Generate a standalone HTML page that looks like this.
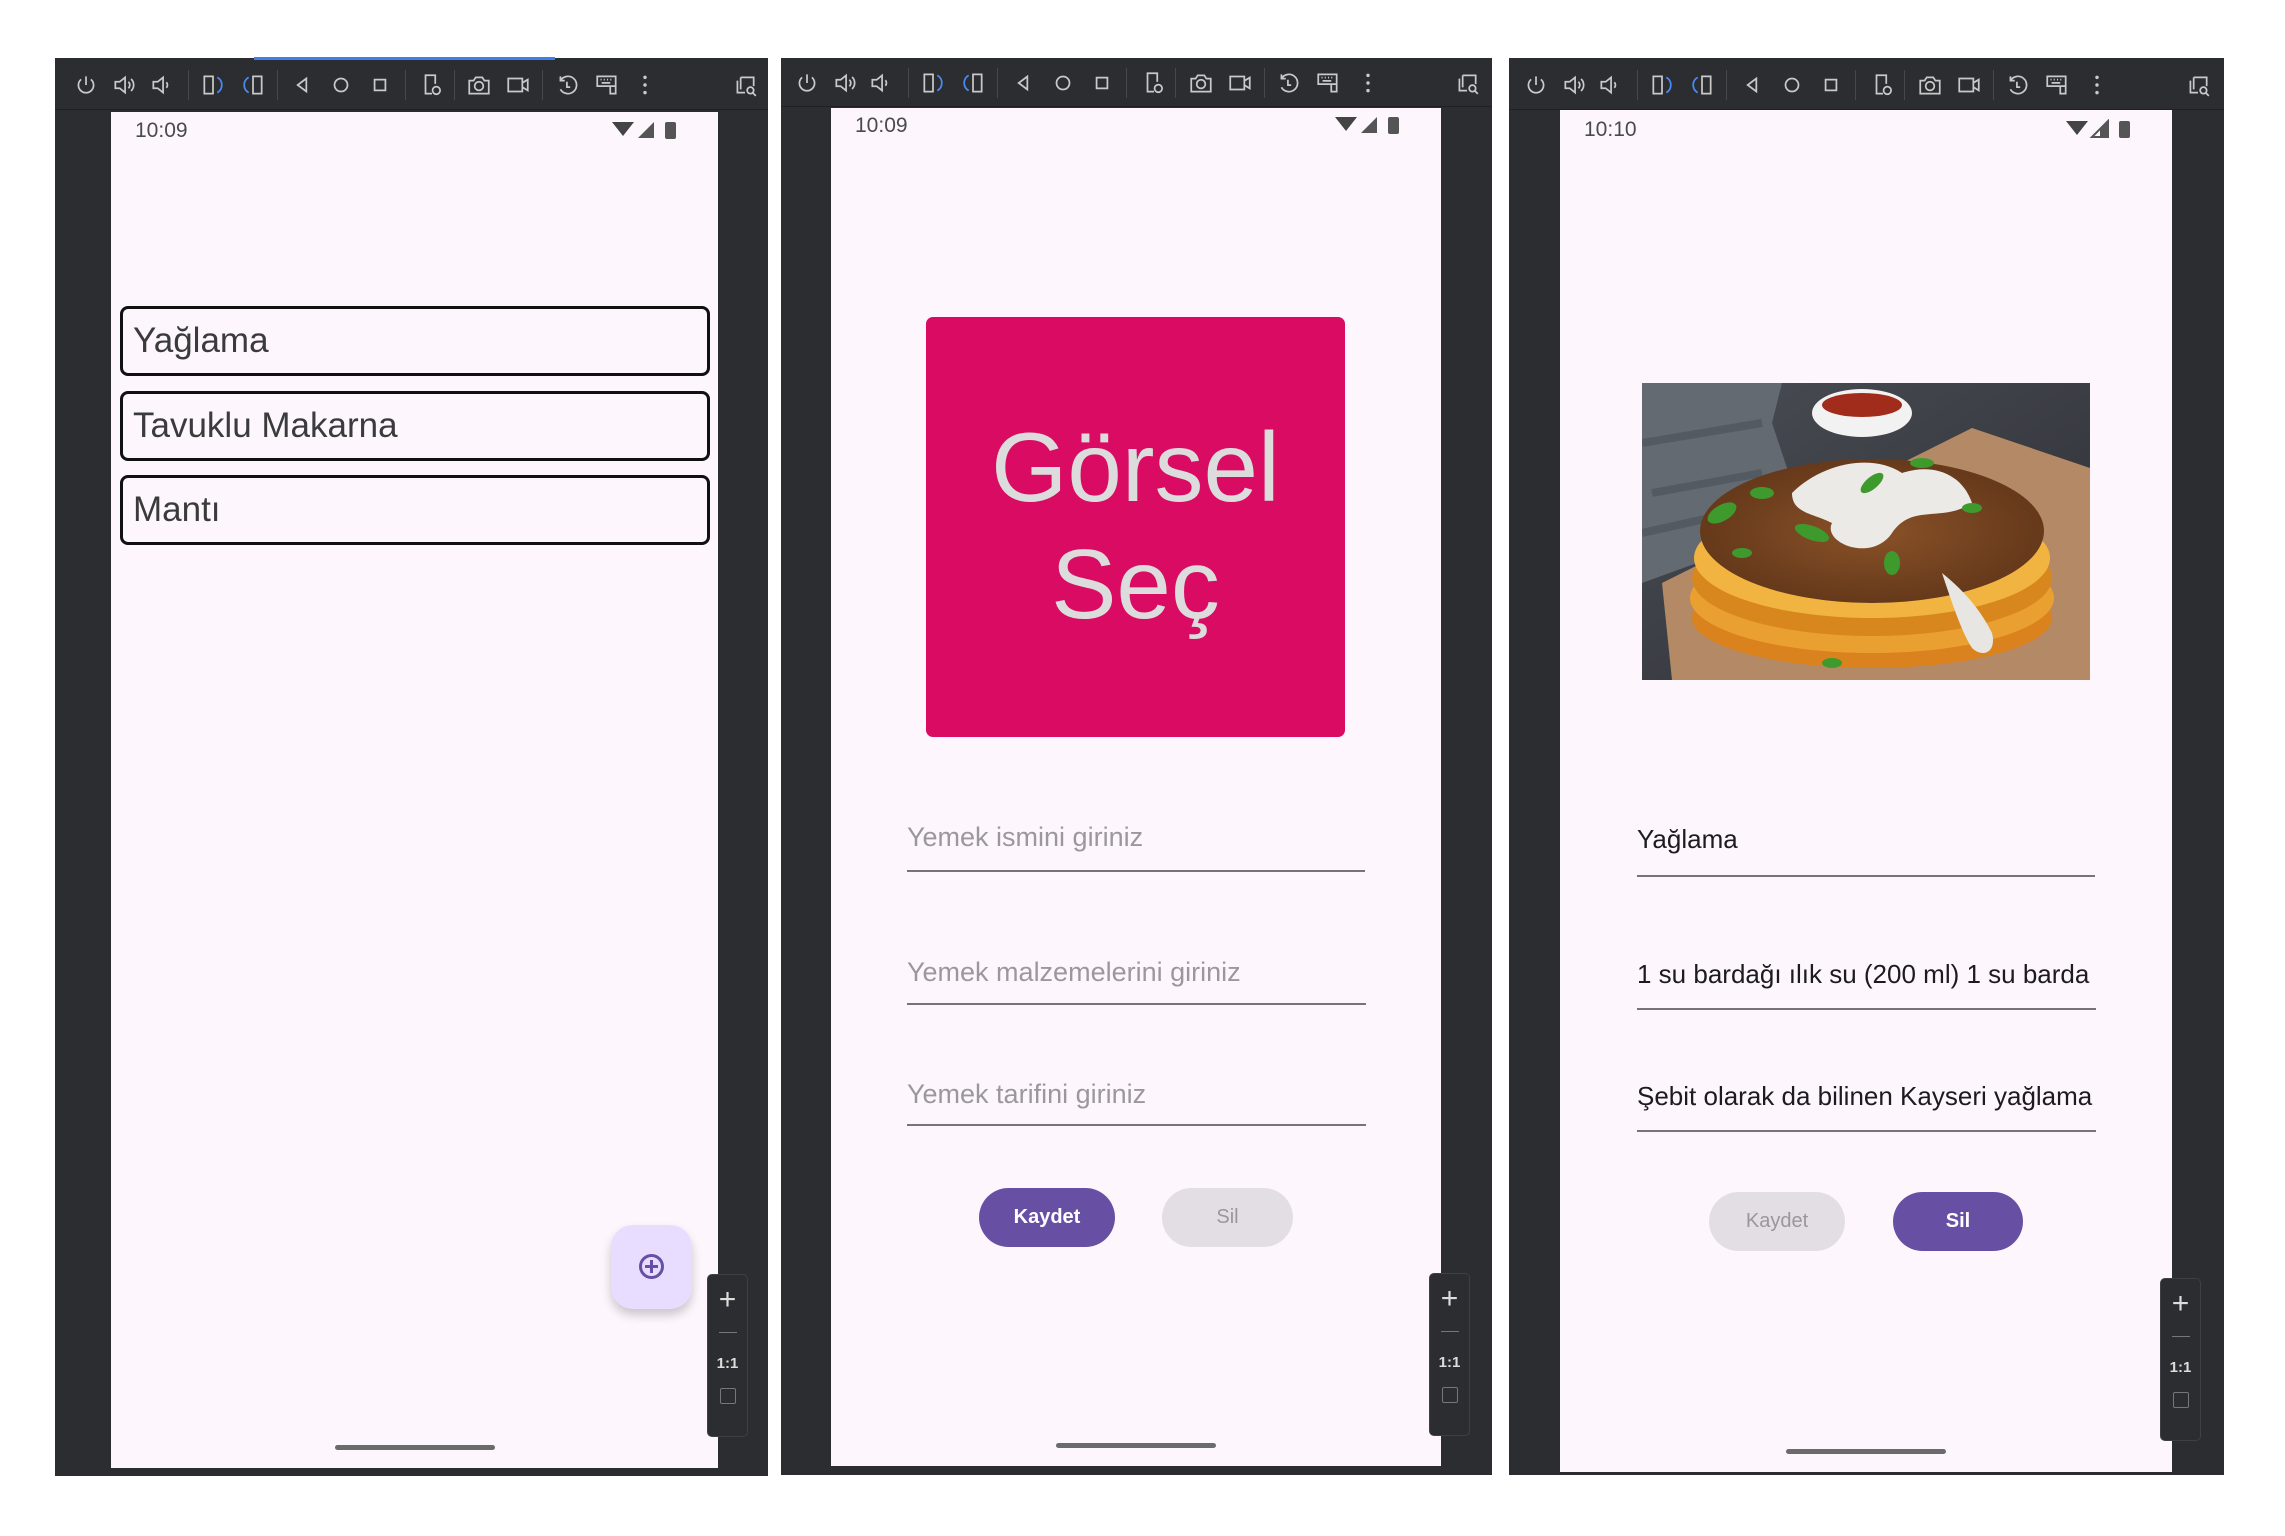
<!DOCTYPE html>
<html><head><meta charset="utf-8">
<style>
*{margin:0;padding:0;box-sizing:border-box}
body{width:2285px;height:1536px;background:#fff;position:relative;overflow:hidden;font-family:"Liberation Sans",sans-serif}
.panel{position:absolute;top:58px;background:#2b2d30}
.tb{position:absolute;left:0;right:0;top:0;height:52px;border-bottom:1px solid #1f2022}
.ic{position:absolute;top:14px;width:26px;height:26px}
.sep{position:absolute;top:12px;width:1px;height:30px;background:#45484c}
.screen{position:absolute;background:#fdf7fd;overflow:hidden}
.time{position:absolute;left:24px;top:7px;font-size:21px;color:#4a4a4a}
.stat{position:absolute;top:8px;right:40px}
.handle{position:absolute;bottom:18px;left:50%;margin-left:-80px;width:160px;height:5px;border-radius:3px;background:#6b6b6b}
.zc{position:absolute;width:41px;height:163px;background:#2b2d30;border:1px solid #3d4044;border-radius:5px;color:#ddd;text-align:center}
.item{position:absolute;left:9px;width:590px;height:70px;border:3px solid #111;border-radius:8px;font-size:35px;color:#3b3b3b;padding-left:10px;line-height:64px}
.hint{position:absolute;font-size:27px;color:#9c969e;white-space:nowrap}
.val{position:absolute;font-size:26px;color:#1d1b20;white-space:nowrap;overflow:hidden}
.ul{position:absolute;height:2px;background:#77737a}
.btn{position:absolute;height:59px;border-radius:30px;font-size:20px;text-align:center;line-height:59px}
.on{background:#6750a4;color:#fff;font-weight:bold}
.off{background:#e3dee4;color:#9a969c}
</style></head><body>

<div class="panel" style="left:55px;width:713px;height:1418px">
 <div style="position:absolute;left:199px;top:-1px;width:301px;height:3px;background:#3c7ff0"></div>
 <div class="tb">
  <svg class="ic" style="left:18px" viewBox="0 0 24 24" fill="none" stroke="#c9c9c9" stroke-width="1.6"><path d="M12 4v8M7.5 6.8a7 7 0 1 0 9 0"/></svg>
  <svg class="ic" style="left:56px" viewBox="0 0 24 24" fill="none" stroke="#c9c9c9" stroke-width="1.6"><path d="M4 9h4l5-4v14l-5-4H4zM16 9a4 4 0 0 1 0 6M18.5 6.5a7.5 7.5 0 0 1 0 11"/></svg>
  <svg class="ic" style="left:94px" viewBox="0 0 24 24" fill="none" stroke="#c9c9c9" stroke-width="1.6"><path d="M4 9h4l5-4v14l-5-4H4zM16 9.5a3.5 3.5 0 0 1 0 5"/></svg>
  <div class="sep" style="left:133px"></div>
  <svg class="ic" style="left:145px" viewBox="0 0 24 24" fill="none" stroke-width="1.6"><path d="M4 4h8v16H4z" stroke="#c9c9c9"/><path d="M16 5a8 8 0 0 1 0 14" stroke="#4a8cf7"/></svg>
  <svg class="ic" style="left:185px" viewBox="0 0 24 24" fill="none" stroke-width="1.6"><path d="M12 4h8v16h-8z" stroke="#c9c9c9"/><path d="M8 5a8 8 0 0 0 0 14" stroke="#4a8cf7"/></svg>
  <div class="sep" style="left:222px"></div>
  <svg class="ic" style="left:234px" viewBox="0 0 24 24" fill="none" stroke="#c9c9c9" stroke-width="1.6"><path d="M16 6L8 12l8 6z"/></svg>
  <svg class="ic" style="left:273px" viewBox="0 0 24 24" fill="none" stroke="#c9c9c9" stroke-width="1.6"><circle cx="12" cy="12" r="6"/></svg>
  <svg class="ic" style="left:312px" viewBox="0 0 24 24" fill="none" stroke="#c9c9c9" stroke-width="1.6"><path d="M7 7h10v10H7z"/></svg>
  <div class="sep" style="left:350px"></div>
  <svg class="ic" style="left:364px" viewBox="0 0 24 24" fill="none" stroke="#c9c9c9" stroke-width="1.6"><path d="M12 20H6V3h9v8"/><circle cx="16" cy="17" r="3.5"/></svg>
  <div class="sep" style="left:399px"></div>
  <svg class="ic" style="left:411px" viewBox="0 0 24 24" fill="none" stroke="#c9c9c9" stroke-width="1.6"><path d="M3 8h4l2-3h6l2 3h4v12H3z"/><circle cx="12" cy="13" r="4"/></svg>
  <svg class="ic" style="left:450px" viewBox="0 0 24 24" fill="none" stroke="#c9c9c9" stroke-width="1.6"><path d="M3 6h13v12H3zM16 10l5-3v10l-5-3"/></svg>
  <div class="sep" style="left:487px"></div>
  <svg class="ic" style="left:500px" viewBox="0 0 24 24" fill="none" stroke="#c9c9c9" stroke-width="1.6"><path d="M5 8a8 8 0 1 1 0 8M5 4v4h4M11 9v5h3"/></svg>
  <svg class="ic" style="left:539px" viewBox="0 0 24 24" fill="none" stroke="#c9c9c9" stroke-width="1.6"><path d="M3 4h17v9H3zM6 7h1M9 7h1M12 7h1M15 7h1M7 10h8M15 13v7h5v-7"/></svg>
  <svg class="ic" style="left:577px" viewBox="0 0 24 24" fill="#c9c9c9"><circle cx="12" cy="5" r="1.6"/><circle cx="12" cy="12" r="1.6"/><circle cx="12" cy="19" r="1.6"/></svg>
  <svg class="ic" style="left:677px" viewBox="0 0 24 24" fill="none" stroke="#c9c9c9" stroke-width="1.6"><path d="M5 8v11h7M8 5h12v8M8 5v11"/><circle cx="17" cy="17" r="3"/><path d="M19 19l3 3"/></svg>
 </div>
 <div class="screen" style="left:56px;top:54px;width:607px;height:1356px">
  <div class="time">10:09</div>
  <svg class="stat" width="66" height="22" viewBox="0 0 66 22"><path d="M0 2h22L11 16z" fill="#444"/><path d="M26 18L42 2v16z" fill="#555"/><rect x="53" y="2" width="11" height="17" rx="2" fill="#555"/></svg>
  <div class="item" style="top:194px">Yağlama</div>
  <div class="item" style="top:279px">Tavuklu Makarna</div>
  <div class="item" style="top:363px">Mantı</div>
  <div style="position:absolute;left:500px;top:1113px;width:81px;height:84px;border-radius:22px;background:#e9ddff;box-shadow:0 6px 10px rgba(0,0,0,.2)">
   <svg style="position:absolute;left:27px;top:28px" width="27" height="27" viewBox="0 0 27 27" fill="none" stroke="#6750a4" stroke-width="3"><circle cx="13.5" cy="13.5" r="11"/><path d="M13.5 7v13M7 13.5h13"/></svg>
  </div>
  <div class="handle"></div>
 </div>
 <div class="zc" style="left:652px;top:1216px">
  <div style="font-size:30px;line-height:30px;margin-top:10px;font-weight:100">+</div>
  <div style="width:18px;height:1px;background:#777;margin:17px auto 0"></div>
  <div style="font-size:15px;font-weight:bold;margin-top:22px">1:1</div>
  <div style="width:16px;height:16px;border:1px solid #777;border-radius:2px;margin:16px auto 0"></div>
 </div>
</div>

<div class="panel" style="left:781px;width:711px;height:1417px">
 <div class="tb" style="height:49px">
  <svg class="ic" style="left:13px;top:12px" viewBox="0 0 24 24" fill="none" stroke="#c9c9c9" stroke-width="1.6"><path d="M12 4v8M7.5 6.8a7 7 0 1 0 9 0"/></svg>
  <svg class="ic" style="left:51px;top:12px" viewBox="0 0 24 24" fill="none" stroke="#c9c9c9" stroke-width="1.6"><path d="M4 9h4l5-4v14l-5-4H4zM16 9a4 4 0 0 1 0 6M18.5 6.5a7.5 7.5 0 0 1 0 11"/></svg>
  <svg class="ic" style="left:87px;top:12px" viewBox="0 0 24 24" fill="none" stroke="#c9c9c9" stroke-width="1.6"><path d="M4 9h4l5-4v14l-5-4H4zM16 9.5a3.5 3.5 0 0 1 0 5"/></svg>
  <div class="sep" style="left:127px;top:10px"></div>
  <svg class="ic" style="left:139px;top:12px" viewBox="0 0 24 24" fill="none" stroke-width="1.6"><path d="M4 4h8v16H4z" stroke="#c9c9c9"/><path d="M16 5a8 8 0 0 1 0 14" stroke="#4a8cf7"/></svg>
  <svg class="ic" style="left:179px;top:12px" viewBox="0 0 24 24" fill="none" stroke-width="1.6"><path d="M12 4h8v16h-8z" stroke="#c9c9c9"/><path d="M8 5a8 8 0 0 0 0 14" stroke="#4a8cf7"/></svg>
  <div class="sep" style="left:216px;top:10px"></div>
  <svg class="ic" style="left:229px;top:12px" viewBox="0 0 24 24" fill="none" stroke="#c9c9c9" stroke-width="1.6"><path d="M16 6L8 12l8 6z"/></svg>
  <svg class="ic" style="left:269px;top:12px" viewBox="0 0 24 24" fill="none" stroke="#c9c9c9" stroke-width="1.6"><circle cx="12" cy="12" r="6"/></svg>
  <svg class="ic" style="left:308px;top:12px" viewBox="0 0 24 24" fill="none" stroke="#c9c9c9" stroke-width="1.6"><path d="M7 7h10v10H7z"/></svg>
  <div class="sep" style="left:345px;top:10px"></div>
  <svg class="ic" style="left:360px;top:12px" viewBox="0 0 24 24" fill="none" stroke="#c9c9c9" stroke-width="1.6"><path d="M12 20H6V3h9v8"/><circle cx="16" cy="17" r="3.5"/></svg>
  <div class="sep" style="left:394px;top:10px"></div>
  <svg class="ic" style="left:407px;top:12px" viewBox="0 0 24 24" fill="none" stroke="#c9c9c9" stroke-width="1.6"><path d="M3 8h4l2-3h6l2 3h4v12H3z"/><circle cx="12" cy="13" r="4"/></svg>
  <svg class="ic" style="left:446px;top:12px" viewBox="0 0 24 24" fill="none" stroke="#c9c9c9" stroke-width="1.6"><path d="M3 6h13v12H3zM16 10l5-3v10l-5-3"/></svg>
  <div class="sep" style="left:483px;top:10px"></div>
  <svg class="ic" style="left:495px;top:12px" viewBox="0 0 24 24" fill="none" stroke="#c9c9c9" stroke-width="1.6"><path d="M5 8a8 8 0 1 1 0 8M5 4v4h4M11 9v5h3"/></svg>
  <svg class="ic" style="left:534px;top:12px" viewBox="0 0 24 24" fill="none" stroke="#c9c9c9" stroke-width="1.6"><path d="M3 4h17v9H3zM6 7h1M9 7h1M12 7h1M15 7h1M7 10h8M15 13v7h5v-7"/></svg>
  <svg class="ic" style="left:574px;top:12px" viewBox="0 0 24 24" fill="#c9c9c9"><circle cx="12" cy="5" r="1.6"/><circle cx="12" cy="12" r="1.6"/><circle cx="12" cy="19" r="1.6"/></svg>
  <svg class="ic" style="left:673px;top:12px" viewBox="0 0 24 24" fill="none" stroke="#c9c9c9" stroke-width="1.6"><path d="M5 8v11h7M8 5h12v8M8 5v11"/><circle cx="17" cy="17" r="3"/><path d="M19 19l3 3"/></svg>
 </div>
 <div class="screen" style="left:50px;top:50px;width:610px;height:1358px">
  <div class="time" style="top:6px">10:09</div>
  <svg class="stat" style="top:7px" width="66" height="22" viewBox="0 0 66 22"><path d="M0 2h22L11 16z" fill="#444"/><path d="M26 18L42 2v16z" fill="#555"/><rect x="53" y="2" width="11" height="17" rx="2" fill="#555"/></svg>
  <div style="position:absolute;left:95px;top:209px;width:419px;height:420px;background:#d90b63;border-radius:7px;color:#dcdcdc;font-size:98px;text-align:center;line-height:117px;padding-top:92px">Görsel<br>Seç</div>
  <div class="hint" style="left:76px;top:714px">Yemek ismini giriniz</div>
  <div class="ul" style="left:76px;top:762px;width:458px"></div>
  <div class="hint" style="left:76px;top:849px">Yemek malzemelerini giriniz</div>
  <div class="ul" style="left:76px;top:895px;width:459px"></div>
  <div class="hint" style="left:76px;top:971px">Yemek tarifini giriniz</div>
  <div class="ul" style="left:76px;top:1016px;width:459px"></div>
  <div class="btn on" style="left:148px;top:1080px;width:136px">Kaydet</div>
  <div class="btn off" style="left:331px;top:1080px;width:131px">Sil</div>
  <div class="handle"></div>
 </div>
 <div class="zc" style="left:648px;top:1215px">
  <div style="font-size:30px;line-height:30px;margin-top:10px;font-weight:100">+</div>
  <div style="width:18px;height:1px;background:#777;margin:17px auto 0"></div>
  <div style="font-size:15px;font-weight:bold;margin-top:22px">1:1</div>
  <div style="width:16px;height:16px;border:1px solid #777;border-radius:2px;margin:16px auto 0"></div>
 </div>
</div>

<div class="panel" style="left:1509px;width:715px;height:1417px">
 <div class="tb">
  <svg class="ic" style="left:14px" viewBox="0 0 24 24" fill="none" stroke="#c9c9c9" stroke-width="1.6"><path d="M12 4v8M7.5 6.8a7 7 0 1 0 9 0"/></svg>
  <svg class="ic" style="left:52px" viewBox="0 0 24 24" fill="none" stroke="#c9c9c9" stroke-width="1.6"><path d="M4 9h4l5-4v14l-5-4H4zM16 9a4 4 0 0 1 0 6M18.5 6.5a7.5 7.5 0 0 1 0 11"/></svg>
  <svg class="ic" style="left:88px" viewBox="0 0 24 24" fill="none" stroke="#c9c9c9" stroke-width="1.6"><path d="M4 9h4l5-4v14l-5-4H4zM16 9.5a3.5 3.5 0 0 1 0 5"/></svg>
  <div class="sep" style="left:128px"></div>
  <svg class="ic" style="left:140px" viewBox="0 0 24 24" fill="none" stroke-width="1.6"><path d="M4 4h8v16H4z" stroke="#c9c9c9"/><path d="M16 5a8 8 0 0 1 0 14" stroke="#4a8cf7"/></svg>
  <svg class="ic" style="left:180px" viewBox="0 0 24 24" fill="none" stroke-width="1.6"><path d="M12 4h8v16h-8z" stroke="#c9c9c9"/><path d="M8 5a8 8 0 0 0 0 14" stroke="#4a8cf7"/></svg>
  <div class="sep" style="left:217px"></div>
  <svg class="ic" style="left:230px" viewBox="0 0 24 24" fill="none" stroke="#c9c9c9" stroke-width="1.6"><path d="M16 6L8 12l8 6z"/></svg>
  <svg class="ic" style="left:270px" viewBox="0 0 24 24" fill="none" stroke="#c9c9c9" stroke-width="1.6"><circle cx="12" cy="12" r="6"/></svg>
  <svg class="ic" style="left:309px" viewBox="0 0 24 24" fill="none" stroke="#c9c9c9" stroke-width="1.6"><path d="M7 7h10v10H7z"/></svg>
  <div class="sep" style="left:346px"></div>
  <svg class="ic" style="left:361px" viewBox="0 0 24 24" fill="none" stroke="#c9c9c9" stroke-width="1.6"><path d="M12 20H6V3h9v8"/><circle cx="16" cy="17" r="3.5"/></svg>
  <div class="sep" style="left:395px"></div>
  <svg class="ic" style="left:408px" viewBox="0 0 24 24" fill="none" stroke="#c9c9c9" stroke-width="1.6"><path d="M3 8h4l2-3h6l2 3h4v12H3z"/><circle cx="12" cy="13" r="4"/></svg>
  <svg class="ic" style="left:447px" viewBox="0 0 24 24" fill="none" stroke="#c9c9c9" stroke-width="1.6"><path d="M3 6h13v12H3zM16 10l5-3v10l-5-3"/></svg>
  <div class="sep" style="left:484px"></div>
  <svg class="ic" style="left:496px" viewBox="0 0 24 24" fill="none" stroke="#c9c9c9" stroke-width="1.6"><path d="M5 8a8 8 0 1 1 0 8M5 4v4h4M11 9v5h3"/></svg>
  <svg class="ic" style="left:535px" viewBox="0 0 24 24" fill="none" stroke="#c9c9c9" stroke-width="1.6"><path d="M3 4h17v9H3zM6 7h1M9 7h1M12 7h1M15 7h1M7 10h8M15 13v7h5v-7"/></svg>
  <svg class="ic" style="left:575px" viewBox="0 0 24 24" fill="#c9c9c9"><circle cx="12" cy="5" r="1.6"/><circle cx="12" cy="12" r="1.6"/><circle cx="12" cy="19" r="1.6"/></svg>
  <svg class="ic" style="left:676px" viewBox="0 0 24 24" fill="none" stroke="#c9c9c9" stroke-width="1.6"><path d="M5 8v11h7M8 5h12v8M8 5v11"/><circle cx="17" cy="17" r="3"/><path d="M19 19l3 3"/></svg>
 </div>
 <div class="screen" style="left:51px;top:52px;width:612px;height:1362px">
  <div class="time" style="top:8px">10:10</div>
  <svg class="stat" style="top:9px" width="66" height="22" viewBox="0 0 66 22"><path d="M0 2h22L11 16z" fill="#444"/><path d="M26 18L42 2v16z" fill="none" stroke="#555" stroke-width="2"/><path d="M34 10L42 2v16h-8z" fill="#555"/><rect x="53" y="2" width="11" height="17" rx="2" fill="#555"/></svg>
  <svg style="position:absolute;left:82px;top:273px" width="448" height="297" viewBox="0 0 448 297">
   <defs>
    <linearGradient id="bg" x1="0" y1="0" x2="1" y2="1"><stop offset="0" stop-color="#4a4e55"/><stop offset="1" stop-color="#2c2e33"/></linearGradient>
    <radialGradient id="mince" cx=".5" cy=".5" r=".6"><stop offset="0" stop-color="#8a5228"/><stop offset="1" stop-color="#5e3418"/></radialGradient>
   </defs>
   <rect width="448" height="297" fill="url(#bg)"/>
   <path d="M0 0h140l-10 40 20 60-40 60-110 40z" fill="#646a72"/>
   <path d="M0 60l120 -20M10 110l110 -20M0 150l90 -20" stroke="#545a62" stroke-width="8"/>
   <path d="M20 200L330 45l118 40v212H30z" fill="#b48a66"/>
   <ellipse cx="220" cy="30" rx="50" ry="24" fill="#f2f2f2"/>
   <ellipse cx="220" cy="22" rx="40" ry="12" fill="#a22c1c"/>
   <ellipse cx="230" cy="235" rx="180" ry="50" fill="#d9821e"/>
   <ellipse cx="230" cy="215" rx="182" ry="55" fill="#eaa030"/>
   <ellipse cx="230" cy="195" rx="180" ry="58" fill="#d8871e"/>
   <ellipse cx="230" cy="175" rx="178" ry="60" fill="#f2b440"/>
   <ellipse cx="230" cy="148" rx="172" ry="72" fill="url(#mince)"/>
   <path d="M150 110c30-30 80-40 110-20 30-10 60 0 70 30-30 20-60 0-80 30-20 30-70 10-60-10-20-10-40-10-40-30z" fill="#eceae6"/>
   <path d="M300 190c10 30 20 60 30 75 10 10 25 5 20-15-10-20-25-40-50-60z" fill="#e8e6e2"/>
   <g fill="#3f9a2e">
    <ellipse cx="80" cy="130" rx="16" ry="8" transform="rotate(-30 80 130)"/>
    <ellipse cx="120" cy="110" rx="12" ry="6"/>
    <ellipse cx="170" cy="150" rx="18" ry="7" transform="rotate(20 170 150)"/>
    <ellipse cx="230" cy="100" rx="14" ry="6" transform="rotate(-40 230 100)"/>
    <ellipse cx="280" cy="80" rx="12" ry="5"/>
    <ellipse cx="330" cy="125" rx="10" ry="5"/>
    <ellipse cx="250" cy="180" rx="8" ry="12"/>
    <ellipse cx="100" cy="170" rx="10" ry="5"/>
    <ellipse cx="190" cy="280" rx="10" ry="5"/>
   </g>
  </svg>
  <div class="val" style="left:77px;top:714px;width:462px">Yağlama</div>
  <div class="ul" style="left:77px;top:765px;width:458px"></div>
  <div class="val" style="left:77px;top:849px;width:462px">1 su bardağı ılık su (200 ml) 1 su barda</div>
  <div class="ul" style="left:77px;top:898px;width:459px"></div>
  <div class="val" style="left:77px;top:971px;width:462px">Şebit olarak da bilinen Kayseri yağlama</div>
  <div class="ul" style="left:77px;top:1020px;width:459px"></div>
  <div class="btn off" style="left:149px;top:1082px;width:136px">Kaydet</div>
  <div class="btn on" style="left:333px;top:1082px;width:130px">Sil</div>
  <div class="handle"></div>
 </div>
 <div class="zc" style="left:651px;top:1220px">
  <div style="font-size:30px;line-height:30px;margin-top:10px;font-weight:100">+</div>
  <div style="width:18px;height:1px;background:#777;margin:17px auto 0"></div>
  <div style="font-size:15px;font-weight:bold;margin-top:22px">1:1</div>
  <div style="width:16px;height:16px;border:1px solid #777;border-radius:2px;margin:16px auto 0"></div>
 </div>
</div>
</body></html>
